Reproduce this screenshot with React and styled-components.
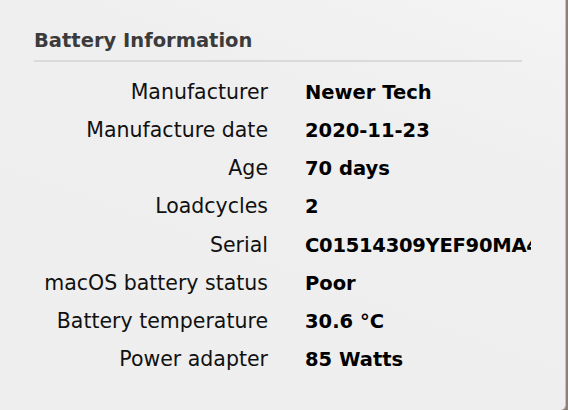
import React from "react";
import styled, { createGlobalStyle } from "styled-components";

const Global = createGlobalStyle`
  html, body { margin: 0; padding: 0; }
  body {
    background: #8c8079;
    font-family: "DejaVu Sans", "Liberation Sans", sans-serif;
    -webkit-font-smoothing: antialiased;
  }
`;

const Window = styled.div`
  width: 566px;
  height: 410px;
  box-sizing: border-box;
  background: linear-gradient(200deg, #f4f4f4 0%, #efefef 30%, #eeeeee 100%);
  border-right: 1px solid #c4c4c4;
  border-bottom-right-radius: 5px;
  overflow: hidden;
`;

const Section = styled.section`
  padding: 29px 0 0 34px;
`;

const Heading = styled.h2`
  margin: 0;
  font-size: 19.5px;
  line-height: 24px;
  font-weight: bold;
  color: #3b3b3b;
`;

const Divider = styled.hr`
  margin: 7px 0 0 0;
  width: 488px;
  height: 2px;
  border: none;
  background: #dadada;
`;

const Grid = styled.dl`
  margin: 11px 0 0 0;
  display: grid;
  grid-template-columns: 234px 226px;
  grid-auto-rows: 38.14px;
  column-gap: 37px;
  align-items: baseline;
`;

const Label = styled.dt`
  margin: 0;
  text-align: right;
  font-size: 20.5px;
  line-height: 38.14px;
  color: #111;
  white-space: nowrap;
`;

const Value = styled.dd`
  margin: 0;
  font-size: 19.5px;
  line-height: 38.14px;
  font-weight: bold;
  color: #000;
  white-space: nowrap;
  overflow: hidden;
  letter-spacing: ${(p) => (p.$tight ? "-0.25px" : "0")};
`;

const rows = [
  ["Manufacturer", "Newer Tech"],
  ["Manufacture date", "2020-11-23"],
  ["Age", "70 days"],
  ["Loadcycles", "2"],
  ["Serial", "C01514309YEF90MA4", true],
  ["macOS battery status", "Poor"],
  ["Battery temperature", "30.6 °C"],
  ["Power adapter", "85 Watts"],
];

export default function App() {
  return (
    <>
      <Global />
      <Window>
        <Section>
          <Heading>Battery Information</Heading>
          <Divider />
          <Grid>
            {rows.map(([k, v, tight]) => (
              <React.Fragment key={k}>
                <Label>{k}</Label>
                <Value $tight={tight}>{v}</Value>
              </React.Fragment>
            ))}
          </Grid>
        </Section>
      </Window>
    </>
  );
}
